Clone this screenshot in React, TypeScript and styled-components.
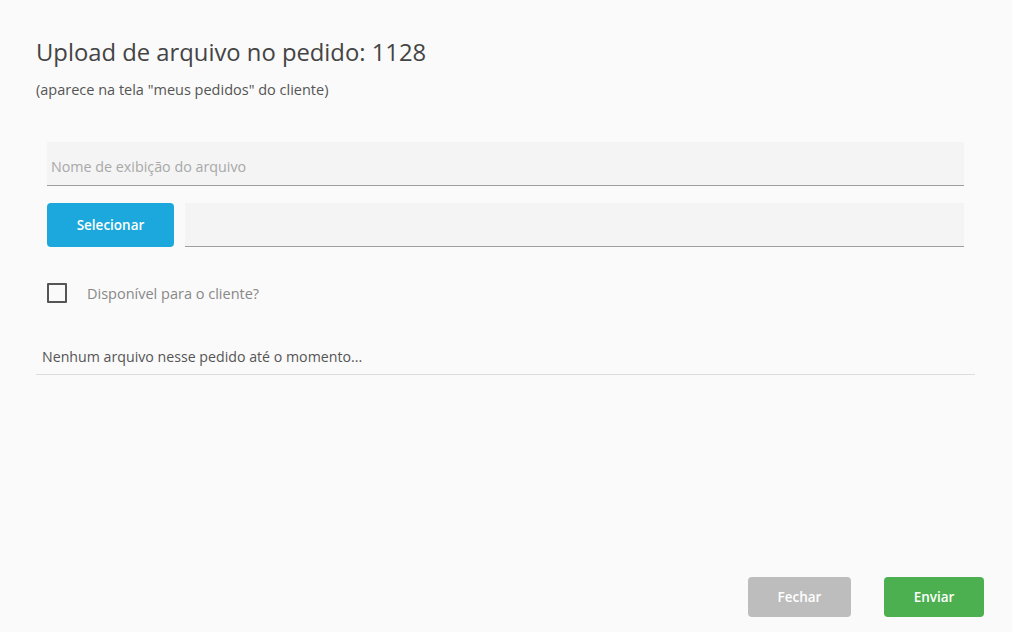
import styled, { createGlobalStyle } from 'styled-components';

const GlobalStyle = createGlobalStyle`
   html, body {
      margin: 0;
      padding: 0;
      background: #fafafa;
   }

   body {
      font-family: 'Open Sans', 'Noto Sans', sans-serif;
      color: #444;
   }
`;

const Page = styled.div`
   display: flex;
   flex-direction: column;
   height: 632px;
   box-sizing: border-box;
   padding: 36px 37px 15px 36px;
`;

const Title = styled.h1`
   margin: 0;
   font-size: 23.8px;
   font-weight: 400;
   line-height: 32px;
   color: #444;
`;

const Subtitle = styled.p`
   margin: 12px 0 0;
   font-size: 14.5px;
   line-height: 20px;
   color: #555;
`;

const Form = styled.div`
   display: flex;
   flex-direction: column;
   gap: 17px;
   margin: 42px 11px 0;
`;

const Field = styled.input<{ $grow?: boolean }>`
   flex: ${p => (p.$grow ? 1 : 'none')};
   height: 44px;
   box-sizing: border-box;
   border: none;
   border-bottom: 1px solid #9e9e9e;
   background: #f4f4f4;
   padding: 5px 4px 0;
   font-family: inherit;
   font-size: 14.3px;
   color: #444;
   outline: none;

   &::placeholder {
      color: #a8a8a8;
   }
`;

const FileRow = styled.div`
   display: flex;
   gap: 11px;
`;

const Button = styled.button<{ $color: string; $tall?: boolean }>`
   height: ${p => (p.$tall ? '44px' : '40px')};
   border: none;
   border-radius: 4px;
   background: ${p => p.$color};
   color: #fff;
   font-family: inherit;
   font-size: 13.5px;
   font-weight: 600;
   cursor: pointer;
`;

const CheckRow = styled.label`
   display: flex;
   align-items: center;
   gap: 20px;
   margin-top: 19px;
   height: 20px;
   font-size: 14.5px;
   color: #888;
`;

const Box = styled.span`
   width: 20px;
   height: 20px;
   box-sizing: border-box;
   border: 2px solid #555;
   border-radius: 1px;
`;

const EmptyList = styled.div`
   margin-top: 44px;
   padding: 0 6px 7px;
   border-bottom: 1px solid #ddd;
   font-size: 14.2px;
   line-height: 20px;
   color: #555;
`;

const Footer = styled.div`
   margin-top: auto;
   margin-right: -9px;
   display: flex;
   justify-content: flex-end;
   gap: 33px;
`;

export default function App() {
   return (
      <>
         <GlobalStyle />
         <Page>
            <Title>Upload de arquivo no pedido: 1128</Title>
            <Subtitle>(aparece na tela "meus pedidos" do cliente)</Subtitle>
            <Form>
               <Field placeholder="Nome de exibição do arquivo" />
               <FileRow>
                  <Button $color="#1ca8dd" $tall style={{ width: 127 }}>
                     Selecionar
                  </Button>
                  <Field $grow readOnly />
               </FileRow>
               <CheckRow>
                  <Box />
                  Disponível para o cliente?
               </CheckRow>
            </Form>
            <EmptyList>Nenhum arquivo nesse pedido até o momento...</EmptyList>
            <Footer>
               <Button $color="#bdbdbd" style={{ width: 103 }}>
                  Fechar
               </Button>
               <Button $color="#4caf50" style={{ width: 100 }}>
                  Enviar
               </Button>
            </Footer>
         </Page>
      </>
   );
}
